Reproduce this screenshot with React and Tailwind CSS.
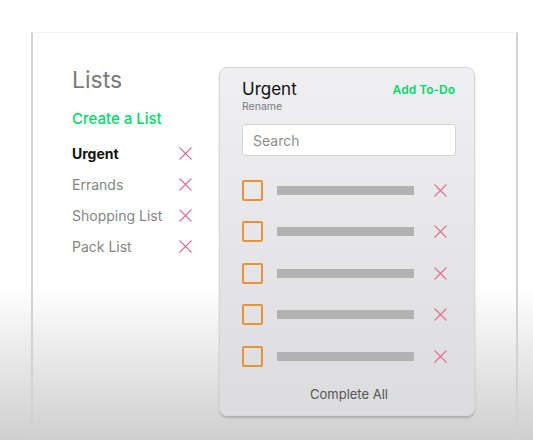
import React from "react";

const lists = [
  { name: "Urgent", active: true },
  { name: "Errands" },
  { name: "Shopping List" },
  { name: "Pack List" },
];

const XIcon = ({ size = 15, className = "" }) => (
  <svg width={size} height={size} viewBox="0 0 16 16" className={className}>
    <path d="M2 2 L14 14 M14 2 L2 14" stroke="currentColor" strokeWidth="1.4" strokeLinecap="round" fill="none" />
  </svg>
);

const App = () => {
  return (
    <div
      className="w-[533px] h-[440px] overflow-hidden bg-gradient-to-b from-white via-white via-65% to-[#cfcfcf]"
      style={{ fontFamily: "Inter, 'Noto Sans', sans-serif" }}
    >
      <div className="ml-[31px] mt-[32px] w-[487px] h-[420px] border-x-2 border-x-[#d2d2d2] border-t border-t-[#f2f2f2] flex pl-[39px] pt-[34px]">
        {/* Lists column */}
        <div className="w-[147px] flex flex-col">
          <h1 className="text-[23px] leading-[28px] text-[#7a7a7a] font-normal mt-[-1px]">Lists</h1>
          <button className="text-left text-[15px] leading-[20px] text-[#00d86c] font-medium mt-[15px]">
            Create a List
          </button>
          <ul className="mt-[14px] flex flex-col gap-[11.3px] w-[121px]">
            {lists.map((l) => (
              <li key={l.name} className="flex items-center justify-between h-[20px]">
                <span
                  className={
                    l.active
                      ? "text-[14px] font-bold text-[#111]"
                      : "text-[14px] text-[#858585]"
                  }
                >
                  {l.name}
                </span>
                <XIcon className="text-[#e4658b]" />
              </li>
            ))}
          </ul>
        </div>

        {/* To-do card */}
        <div className="w-[256px] h-[349px] rounded-[8px] border border-[#d6d6d8] bg-gradient-to-b from-[#f0eff1] to-[#dcdbdd] shadow-[0_2px_2px_rgba(0,0,0,0.18)] pl-[22px] pr-[18px] pt-[11px] flex flex-col">
          <div className="flex items-start justify-between">
            <div>
              <h2 className="text-[17px] leading-[20px] text-[#111]">Urgent</h2>
              <p className="text-[10.5px] leading-[14px] text-[#7b7b7b] mt-[1px]">Rename</p>
            </div>
            <button className="text-[12px] font-semibold text-[#00d86c] mt-[2px] mr-[1px]">Add To-Do</button>
          </div>
          <input
            placeholder="Search"
            className="mt-[10px] h-[32px] w-full bg-white border border-[#d2d2d2] rounded-[3px] px-[10px] text-[14px] placeholder-[#8e8e8e] outline-none"
          />
          <div className="mt-[24px] flex flex-col gap-[21.6px]">
            {[0, 1, 2, 3, 4].map((i) => (
              <div key={i} className="flex items-center h-[20px]">
                <div className="w-[21px] h-[21px] border-2 border-[#e8933a] rounded-[2px]" />
                <div className="ml-[14px] w-[137px] h-[9px] bg-[#b2b2b2]" />
                <XIcon size={15} className="ml-[19px] text-[#e4658b]" />
              </div>
            ))}
          </div>
          <button className="mt-[19px] text-[13px] text-[#555]">Complete All</button>
        </div>
      </div>
    </div>
  );
};

export default App;
